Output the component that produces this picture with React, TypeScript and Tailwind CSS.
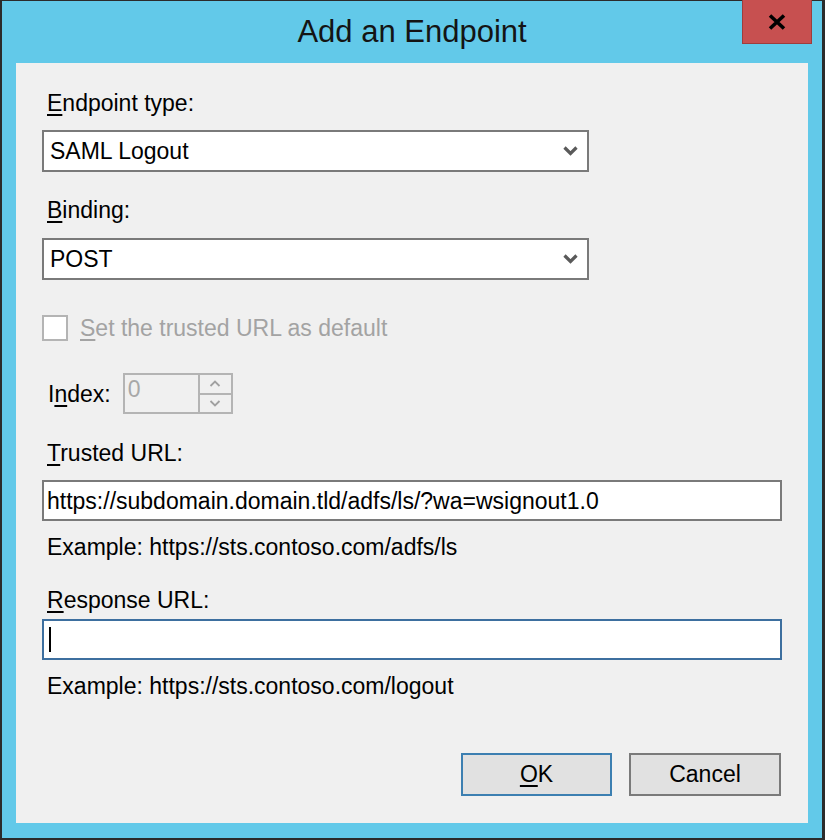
import React from 'react';

const font = { fontFamily: '"Liberation Sans", Arial, sans-serif' };

// Small caret used by the combo boxes
const ComboChevron: React.FC = () => (
  <svg width="15" height="10" viewBox="0 0 15 10" className="shrink-0">
    <path d="M1.5 1.5 L7.5 7.5 L13.5 1.5" fill="none" stroke="#5a5a5a" strokeWidth="3.2" />
  </svg>
);

const SpinArrow: React.FC<{ up?: boolean }> = ({ up }) => (
  <svg width="12" height="7" viewBox="0 0 12 7">
    <path
      d={up ? 'M1.5 6 L6 1.5 L10.5 6' : 'M1.5 1 L6 5.5 L10.5 1'}
      fill="none"
      stroke="#a0a0a0"
      strokeWidth="1.8"
    />
  </svg>
);

const Label: React.FC<{ children: React.ReactNode; className?: string }> = ({ children, className = '' }) => (
  <div className={`h-[26px] leading-[26px] pl-[5px] text-[23px] text-black ${className}`}>{children}</div>
);

const Combo: React.FC<{ value: string; className?: string }> = ({ value, className = '' }) => (
  <div
    className={`w-[547px] h-[42px] bg-white border-2 border-[#7a7a7a] flex items-center justify-between pl-[6px] pr-[9px] ${className}`}
  >
    <span className="text-[23px] leading-[26px] text-black">{value}</span>
    <ComboChevron />
  </div>
);

export default function App() {
  return (
    <div
      className="relative w-[825px] h-[840px] bg-[#2b2b2b] pt-[1px] pl-[2px] pr-[3px] pb-[2px]"
      style={font}
    >
      <div className="w-full h-full bg-[#62c9e9] flex flex-col">
        {/* TITLE BAR */}
        <div className="h-[62px] flex items-center justify-center">
          <span className="text-[31px] leading-[34px] text-[#141414]">Add an Endpoint</span>
        </div>

        {/* CLIENT AREA */}
        <div className="mx-[14px] h-[760px] bg-[#f0f0f0] flex flex-col pl-[26px] pt-[27px]">
          <Label>
            <span className="underline underline-offset-[3px]">E</span>ndpoint type:
          </Label>
          <Combo value="SAML Logout" className="mt-[14px]" />

          <Label className="mt-[25px]">
            <span className="underline underline-offset-[3px]">B</span>inding:
          </Label>
          <Combo value="POST" className="mt-[15px]" />

          {/* disabled checkbox */}
          <div className="mt-[35px] h-[26px] flex items-center">
            <div className="w-[26px] h-[26px] bg-white border-2 border-[#b4b4b4]" />
            <span className="ml-[12px] text-[23px] leading-[26px] text-[#a3a3a3]">
              <span className="underline underline-offset-[3px]">S</span>et the trusted URL as default
            </span>
          </div>

          {/* index spinner */}
          <div className="mt-[32px] h-[41px] flex items-center">
            <span className="pl-[6px] text-[23px] leading-[26px] text-black">
              I<span className="underline underline-offset-[3px]">n</span>dex:
            </span>
            <div className="ml-[12px] w-[110px] h-[41px] border-2 border-[#b4b4b4] flex bg-[#f0f0f0]">
              <div className="flex-1 pl-[3px] text-[23px] leading-[28px] text-[#a8a8a8]">0</div>
              <div className="w-[33px] flex flex-col border-l-2 border-[#b4b4b4]">
                <div className="flex-1 flex items-center justify-center border-b-2 border-[#b4b4b4]">
                  <SpinArrow up />
                </div>
                <div className="flex-1 flex items-center justify-center">
                  <SpinArrow />
                </div>
              </div>
            </div>
          </div>

          <Label className="mt-[26px]">
            <span className="underline underline-offset-[3px]">T</span>rusted URL:
          </Label>
          <div className="mt-[14px] w-[740px] h-[41px] bg-white border-2 border-[#7a7a7a] flex items-center pl-[3px]">
            <span className="text-[23px] leading-[26px] text-black">
              https://subdomain.domain.tld/adfs/ls/?wa=wsignout1.0
            </span>
          </div>
          <Label className="mt-[13px]">Example: https://sts.contoso.com/adfs/ls</Label>

          <Label className="mt-[27px]">
            <span className="underline underline-offset-[3px]">R</span>esponse URL:
          </Label>
          <div className="mt-[6px] w-[740px] h-[41px] bg-white border-2 border-[#3d6f9f] flex items-center pl-[5px]">
            <div className="w-[2px] h-[25px] bg-black" />
          </div>
          <Label className="mt-[13px]">Example: https://sts.contoso.com/logout</Label>

          {/* dialog buttons */}
          <div className="mt-[54px] flex justify-end gap-[17px] pr-[27px]">
            <button className="w-[151px] h-[43px] bg-[#e1e1e1] border-2 border-[#3c7fb1] text-[23px] text-black">
              <span className="underline underline-offset-[3px]">O</span>K
            </button>
            <button className="w-[152px] h-[43px] bg-[#e1e1e1] border-2 border-[#7a7a7a] text-[23px] text-black">
              Cancel
            </button>
          </div>
        </div>
      </div>

      {/* CLOSE BUTTON */}
      <div className="absolute top-0 right-[13px] w-[70px] h-[44px] bg-[#c75050] border border-t-0 border-[#9e3d3d] flex items-center justify-center">
        <svg width="18" height="16" viewBox="0 0 18 16">
          <path d="M2 1.5 L16 14.5 M16 1.5 L2 14.5" stroke="#000" strokeWidth="3.6" />
        </svg>
      </div>
    </div>
  );
}
